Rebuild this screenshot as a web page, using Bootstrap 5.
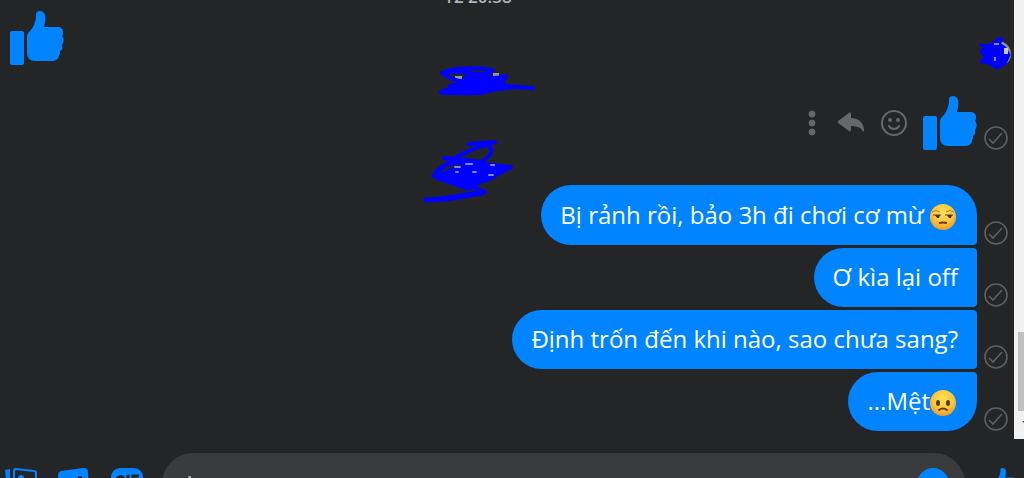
<!DOCTYPE html>
<html lang="vi">
<head>
<meta charset="utf-8">
<meta name="viewport" content="width=device-width, initial-scale=1">
<title>Messenger</title>
<link href="https://cdn.jsdelivr.net/npm/bootstrap@5.3.0/dist/css/bootstrap.min.css" rel="stylesheet">
<style>
  body { background: #242526; color: #fff; font-family: "Open Sans", "Noto Sans", sans-serif; }
  button { background: none; border: 0; padding: 0; color: inherit; }
  svg { display: block; }
  .blue { color: #0084ff; }
  .chat-pane { height: calc(100vh - 39px); }
  .log { padding: 0 6px 8px 8px; }
  .log > * { flex-shrink: 0; }
  .stamp { font-size: 17px; line-height: 20px; color: #b0b3b8; font-weight: 600; padding-right: 60px; margin-bottom: 2px; }
  .stamp-row { height: 31px; }
  .stamp-last { height: 35px; }
  .scribble { position: absolute; pointer-events: none; overflow: visible; }
  .scribble-avatar { right: -6px; bottom: -6px; }
  .scribble-date { left: 431px; top: 2px; }
  .scribble-time { left: 415px; top: -10px; }
  .mine { gap: 7px; }
  .actions { color: #65676b; gap: 16px; margin-right: 8px; }
  .bubbles { gap: 3px; }
  .bubble { background: #0084ff; border-radius: 30px 4px 4px 30px; padding: 11px 19px 12px; font-size: 24px; line-height: 36px; white-space: nowrap; }
  .bubble-top { border-top-right-radius: 30px; padding-top: 12px; }
  .bubble-end { border-bottom-right-radius: 30px; }
  .face { display: inline-block; vertical-align: -7px; margin-right: 2px; }
  .sent { color: #5d5f62; }
  .bar { width: 10px; background: #f1f1f1; }
  .bar-thumb { width: 6px; height: 79px; background: #c1c1c1; margin-bottom: 9px; }
  .composer { padding: 14px 0 14px 5px; }
  .tools { gap: 21px; width: 157px; }
  .field { background: #3a3b3c; border-radius: 31px; height: 62px; padding: 0 16px 0 20px; }
  .field input { background: none; border: 0; outline: 0; color: #fff; font-size: 24px; }
  .field input::placeholder { color: #b0b3b8; opacity: 1; }
  .like-send { width: 59px; padding-left: 20px; }
</style>
</head>
<body class="vh-100 overflow-hidden">
<svg class="position-absolute" width="0" height="0" aria-hidden="true">
  <symbol id="like" viewBox="0 0 54 54">
    <rect x="0" y="20" width="14" height="34" rx="2"/>
    <path d="M17 26c0-3 1-4 3-6 3-3 5-8 6-13V3c0-4 8-4 9 1 1 4 0 8-1 12h13c4 0 6 2 6 5 0 2 0 3-1 4 2 2 2 5 1 7l-1 2c1 3 0 5-2 6 0 2 0 3-1 4 0 4-3 6-8 6H25c-5 0-8-3-8-8z"/>
  </symbol>
  <symbol id="sent" viewBox="0 0 24 24">
    <circle cx="12" cy="12" r="11" fill="none" stroke="currentColor" stroke-width="1.600"/>
    <path d="M5 13l4 4 9-10" fill="none" stroke="currentColor" stroke-width="1.600"/>
  </symbol>
  <radialGradient id="skin" cx=".5" cy=".35" r=".65"><stop offset="0" stop-color="#ffe15a"/><stop offset=".6" stop-color="#fcc63c"/><stop offset="1" stop-color="#f09a2a"/></radialGradient>
</svg>

<main class="chat-pane d-flex">
  <section class="log flex-grow-1 d-flex flex-column justify-content-end overflow-hidden" aria-label="Tin nhắn">
    <div class="stamp text-center">T2 20:38</div>
    <div class="d-flex justify-content-between align-items-end position-relative">
      <svg class="blue" width="56" height="56" fill="currentColor" role="img" aria-label="Thích"><use href="#like" x="2" y="2" width="54" height="54"/></svg>
      <svg class="scribble scribble-avatar" width="36" height="36" viewBox="0 0 36 36" aria-hidden="true">
        <circle cx="20" cy="19" r="13" fill="#8d8da8"/>
        <path d="M3 10l8 1 6-4 5-4 2 1-3 5 6 4 4 7-4 9-8 4-8-5-7-1 3-6-4-5 5-3-4-3z" fill="#00f" stroke="#00f" stroke-width="3" stroke-linejoin="round"/>
        <path d="M16 9h5M17 22v4" stroke="#8585e8" stroke-width="2"/>
        <path d="M28 13v6" stroke="#c4c8d8" stroke-width="4"/>
      </svg>
    </div>
    <div class="stamp-row position-relative">
      <svg class="scribble scribble-date" width="98" height="32" viewBox="0 0 98 32" fill="none" stroke="#00f" stroke-width="4" stroke-linecap="round" stroke-linejoin="round" aria-hidden="true">
        <path d="M16 9h7v5h-7zM54 6h6v3h-6z" fill="#96979c" stroke="none"/>
        <path d="M3 6c10-5 34-6 50-3 3 3-12 6-22 3-9-2-22-1-26 0 2 5 10 6 15 8l37-2 10-3c0 5-16 6-24 8l-32 2 29 2 25-5-18-4-32 8-13 5c15 2 39 2 50-2l22-3 20 1-42-3"/>
        <path d="M26 9l28 1 13-1-3 7-10 8-12 3H3l12-5-2-5h10z" fill="#00f" stroke-width="2"/>
      </svg>
    </div>
    <div class="mine d-flex justify-content-end align-items-end">
      <div class="actions d-flex align-items-center align-self-center">
        <button type="button" aria-label="Thêm"><svg width="14" height="26" fill="currentColor" stroke="currentColor"><circle cx="8" cy="4" r="3"/><circle cx="8" cy="13" r="3"/><circle cx="8" cy="22" r="3"/></svg></button>
        <button type="button" aria-label="Trả lời"><svg width="30" height="26" fill="currentColor"><path d="M4 11L15 3c1-1 2 0 2 1v4c8 0 13 5 13 12 0 2-1 2-2 0-2-3-6-4-11-4v4c0 1-1 2-2 1L4 13q-1-1 0-2z"/></svg></button>
        <button type="button" aria-label="Bày tỏ cảm xúc"><svg width="28" height="28" fill="none" stroke="currentColor" stroke-width="2"><circle cx="14" cy="14" r="12"/><path d="M9 17c2 4 8 4 10 0" stroke-linecap="round"/><circle cx="10" cy="11" r="2" fill="currentColor" stroke="none"/><circle cx="18" cy="11" r="2" fill="currentColor" stroke="none"/></svg></button>
      </div>
      <svg class="blue" width="54" height="54" fill="currentColor" role="img" aria-label="Thích"><use href="#like"/></svg>
      <svg class="sent" width="24" height="24"><use href="#sent"/></svg>
    </div>
    <div class="stamp-last position-relative">
      <svg class="scribble scribble-time" width="92" height="64" viewBox="0 0 92 64" fill="none" stroke="#00f" stroke-width="4" stroke-linecap="round" stroke-linejoin="round" aria-hidden="true">
        <path d="M46 4l26-2-8 3c8 4 4 12-6 17L42 20 21 18l27 3C30 22 14 26 11 36l19 3 32 2 26-14-30-3-30 13 42-10M72 2C56 6 36 14 22 25L11 36l41 8 24-12M3 60c20-1 38-6 59-8L48 46l-14-7"/>
        <path d="M22 33l20-8 42 2-26 14-12 8-34-12z" fill="#00f"/>
        <path d="M3 60l20-1 36-6" stroke-width="5"/>
        <path d="M32 27h5M43 24h6M50 32h3M33 32h2M68 25h3M66 35h4" stroke="#8585e8" stroke-width="2"/>
      </svg>
    </div>
    <div class="bubbles d-flex flex-column">
      <div class="mine d-flex justify-content-end align-items-end">
        <div class="bubble bubble-top">Bị rảnh rồi, bảo 3h đi chơi cơ mừ <svg class="face" width="26" height="28" viewBox="1 0 26 28" role="img" aria-label="Không vui"><circle cx="14" cy="14" r="13" fill="url(#skin)"/><path d="M3 9q4-3 8 0M17 9q4-3 8 0" fill="none" stroke="#c77d1d" stroke-width="1"/><path d="M4 12h8M16 12h8" stroke="#6b4315" stroke-width="1"/><path d="M6 12h5l-1 3H8zM18 12h5l-1 3h-2z" fill="#4a2d12"/><path d="M10 20q4-1 8 0" fill="none" stroke="#6b3b12" stroke-width="2"/></svg></div>
        <svg class="sent" width="24" height="24"><use href="#sent"/></svg>
      </div>
      <div class="mine d-flex justify-content-end align-items-end">
        <div class="bubble">Ơ kìa lại off</div>
        <svg class="sent" width="24" height="24"><use href="#sent"/></svg>
      </div>
      <div class="mine d-flex justify-content-end align-items-end">
        <div class="bubble">Định trốn đến khi nào, sao chưa sang?</div>
        <svg class="sent" width="24" height="24"><use href="#sent"/></svg>
      </div>
      <div class="mine d-flex justify-content-end align-items-end">
        <div class="bubble bubble-end">...Mệt<svg class="face" width="26" height="28" viewBox="1 0 26 28" role="img" aria-label="Buồn"><circle cx="14" cy="14" r="13" fill="url(#skin)"/><ellipse cx="9" cy="14" rx="2" ry="3" fill="#5a3a12"/><ellipse cx="19" cy="14" rx="2" ry="3" fill="#5a3a12"/><path d="M10 21q4-3 8 0" fill="none" stroke="#6b3b12" stroke-width="2" stroke-linecap="round"/></svg></div>
        <svg class="sent" width="24" height="24"><use href="#sent"/></svg>
      </div>
    </div>
  </section>
  <div class="bar d-flex flex-column justify-content-end align-items-end" aria-hidden="true">
    <div class="bar-thumb"></div>
    <svg width="6" height="19" fill="#505050"><path d="M4 1h6L7 4z"/></svg>
  </div>
</main>

<form class="composer d-flex align-items-center">
  <div class="tools d-flex blue">
    <button type="button" aria-label="Ảnh"><svg width="32" height="32" fill="none" stroke="currentColor" stroke-width="2"><path d="M0 2l5-1v29H3z" fill="currentColor" stroke="none"/><path d="M11 1l18 2c2 0 2 1 2 2v22H9V3q0-2 2-2z"/><circle cx="16" cy="10" r="3" fill="currentColor" stroke="none"/></svg></button>
    <button type="button" aria-label="Nhãn dán"><svg width="32" height="32" fill="currentColor"><path d="M3 3l22-3c4 0 5 1 5 5l1 14-11 12H7c-4 0-5-1-5-5L0 8c0-3 1-4 3-5z"/><circle cx="22" cy="10" r="2" fill="#242526"/></svg></button>
    <button type="button" aria-label="GIF"><svg width="32" height="32" fill="currentColor"><rect width="32" height="31" rx="9"/><path d="M13 11c-2-4-8-3-8 4s7 7 8 1h-4M17 7v14M22 21V8h6M22 15h5" fill="none" stroke="#242526" stroke-width="3"/></svg></button>
  </div>
  <div class="field d-flex align-items-center flex-grow-1">
    <input class="flex-grow-1 p-0" type="text" placeholder="Aa" aria-label="Nhập tin nhắn">
    <button class="blue" type="button" aria-label="Biểu tượng cảm xúc"><svg width="32" height="32"><circle cx="16" cy="16" r="16" fill="currentColor"/><circle cx="10" cy="13" r="2" fill="#3a3b3c"/><circle cx="22" cy="13" r="2" fill="#3a3b3c"/><path d="M8 19q8 9 16 0" fill="none" stroke="#3a3b3c" stroke-width="2"/></svg></button>
  </div>
  <div class="like-send d-flex blue"><button type="button" aria-label="Gửi lượt thích"><svg width="32" height="32" fill="currentColor"><use href="#like"/></svg></button></div>
</form>
<script src="https://cdn.jsdelivr.net/npm/bootstrap@5.3.0/dist/js/bootstrap.bundle.min.js"></script>
</body>
</html>
